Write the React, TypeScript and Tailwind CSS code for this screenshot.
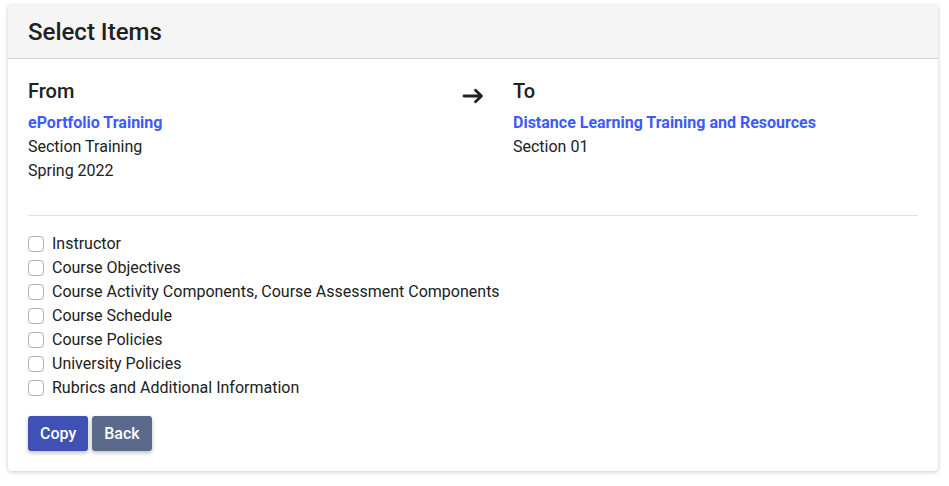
const items = [
  "Instructor",
  "Course Objectives",
  "Course Activity Components, Course Assessment Components",
  "Course Schedule",
  "Course Policies",
  "University Policies",
  "Rubrics and Additional Information",
];

function ArrowIcon() {
  return (
    <svg width="22" height="16" viewBox="0 0 22 16" fill="none" className="mt-[9px]">
      <path
        d="M2 8h17M13.5 2.2L19.5 8l-6 5.8"
        stroke="#212121"
        strokeWidth="2.8"
        strokeLinecap="round"
        strokeLinejoin="round"
      />
    </svg>
  );
}

export default function App() {
  return (
    <div className="min-h-[486px] bg-white pl-2 pt-[5px] font-['Roboto','Liberation_Sans',sans-serif] text-[#212121]">
      <div className="w-[930px] overflow-hidden rounded-[4px] bg-white shadow-[0_1px_4px_rgba(0,0,0,0.22)]">
        <div className="flex h-[54px] items-center border-b border-[#d6d6d6] bg-[#f5f5f5] px-5">
          <h2 className="text-[24px] font-medium leading-none">Select Items</h2>
        </div>

        <div className="px-5 pb-5 pt-5">
          <div className="grid grid-cols-[405px_80px_405px]">
            <div>
              <h5 className="mb-2 text-[20px] font-medium leading-[1.2]">From</h5>
              <a className="block text-[16px] font-bold leading-6 text-[#3d5afe]">ePortfolio Training</a>
              <div className="text-[16px] leading-6">Section Training</div>
              <div className="text-[16px] leading-6">Spring 2022</div>
            </div>
            <div className="flex justify-center">
              <ArrowIcon />
            </div>
            <div>
              <h5 className="mb-2 text-[20px] font-medium leading-[1.2]">To</h5>
              <a className="block text-[16px] font-bold leading-6 text-[#3d5afe]">
                Distance Learning Training and Resources
              </a>
              <div className="text-[16px] leading-6">Section 01</div>
            </div>
          </div>

          <hr className="mb-4 mt-8 border-[#e2e2e2]" />

          <div className="flex flex-col">
            {items.map((label) => (
              <label key={label} className="flex h-6 items-center gap-2 text-[16px] leading-6">
                <span className="h-4 w-4 shrink-0 rounded-[4px] border border-[#adb5bd] bg-white" />
                {label}
              </label>
            ))}
          </div>

          <div className="mt-4 flex gap-1">
            <button className="h-[35px] rounded-[3px] bg-[#3f51b5] px-3 text-[16px] font-medium text-white shadow-[0_2px_4px_rgba(0,0,0,0.25)]">
              Copy
            </button>
            <button className="h-[35px] rounded-[3px] bg-[#5b6a8c] px-3 text-[16px] font-medium text-white shadow-[0_2px_4px_rgba(0,0,0,0.25)]">
              Back
            </button>
          </div>
        </div>
      </div>
    </div>
  );
}
